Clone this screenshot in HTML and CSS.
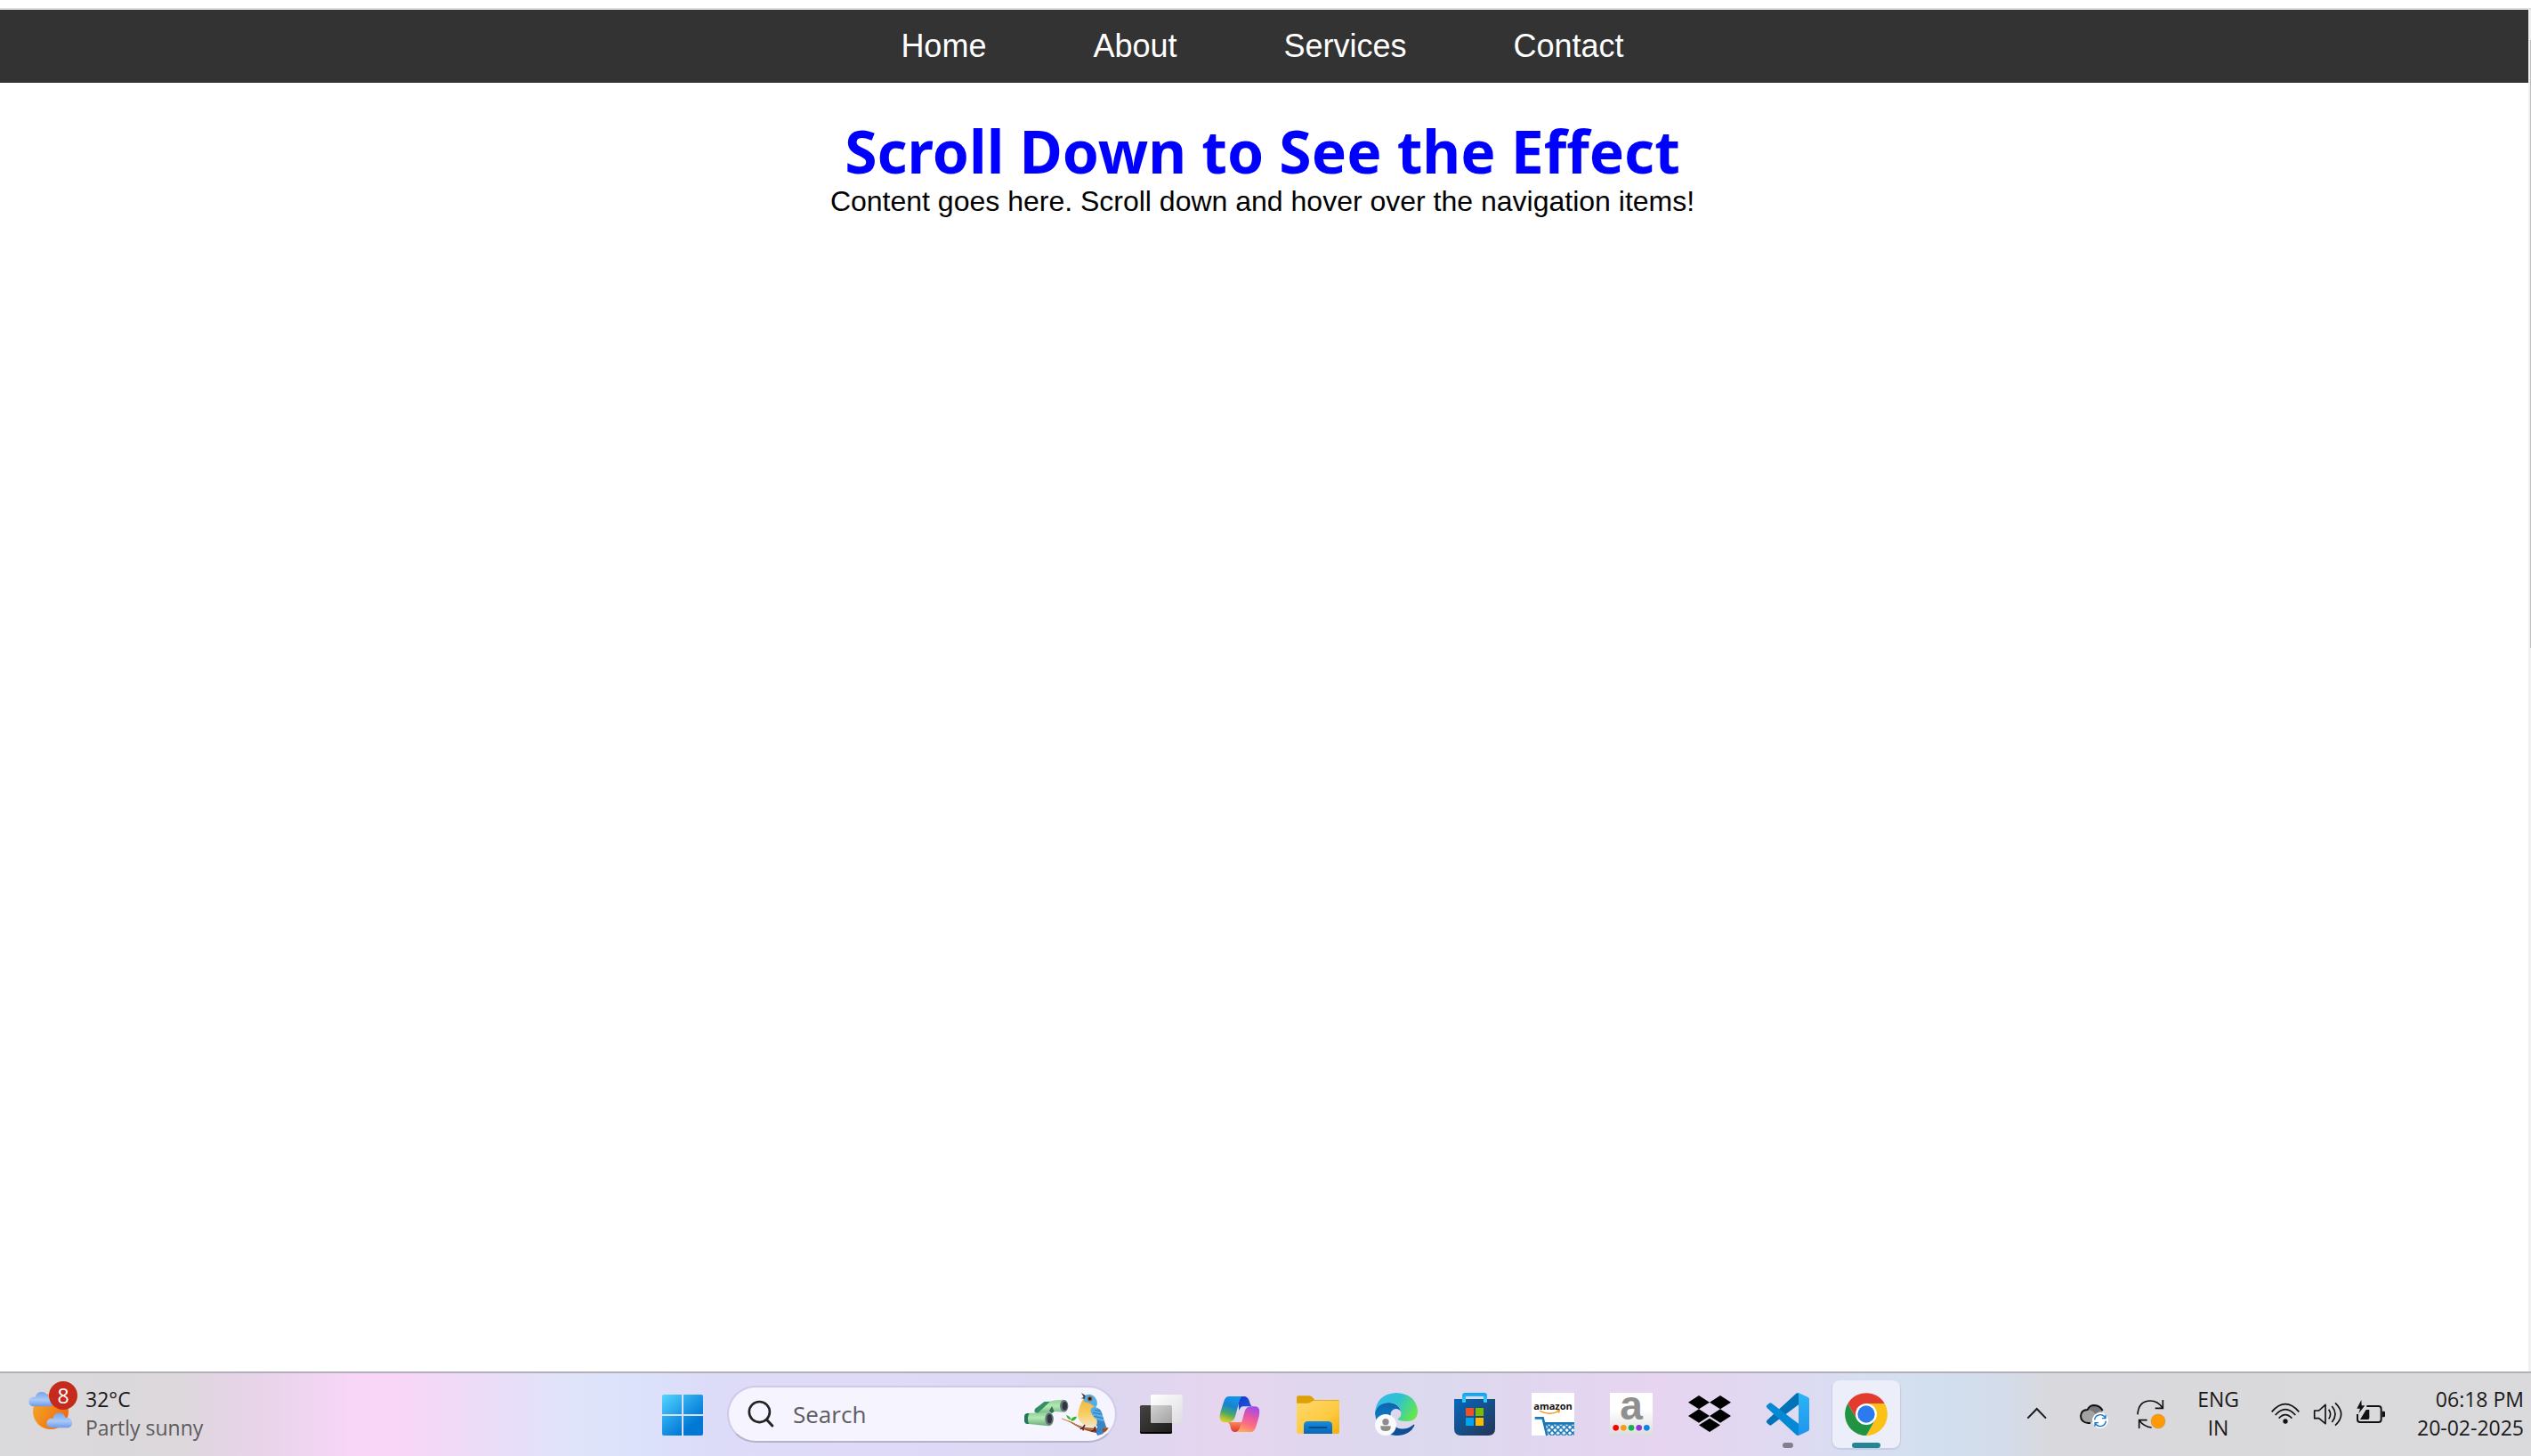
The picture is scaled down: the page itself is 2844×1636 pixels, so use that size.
FILE: index.html
```html
<!DOCTYPE html>
<html lang="en">
<head>
<meta charset="utf-8">
<title>Scroll Effect</title>
<link rel="stylesheet" href="styles.css">
</head>
<body>
<div class="window-edge"></div>
<div class="viewport">
  <div class="page">
    <nav class="navbar">
      <ul class="nav-list">
        <li><a href="#home">Home</a></li>
        <li><a href="#about">About</a></li>
        <li><a href="#services">Services</a></li>
        <li><a href="#contact">Contact</a></li>
      </ul>
    </nav>
    <main class="content">
      <h1>Scroll Down to See the Effect</h1>
      <p>Content goes here. Scroll down and hover over the navigation items!</p>
    </main>
  </div>
  <div class="scrollbar"><div class="thumb"></div></div>
</div>

<footer class="taskbar">
  <button class="weather" type="button">
    <span class="weather-icon">
      <svg width="56" height="76" viewBox="96 66 168 228" aria-hidden="true">
        <defs>
          <linearGradient id="sun" x1="0" y1="0" x2="1" y2="0.6"><stop offset="0" stop-color="#f3b02a"/><stop offset="1" stop-color="#f26a0f"/></linearGradient>
          <linearGradient id="cloud" x1="0" y1="0" x2="0" y2="1"><stop offset="0" stop-color="#78a3ea"/><stop offset=".55" stop-color="#a9caf8"/><stop offset="1" stop-color="#7099e6"/></linearGradient>
        </defs>
        <circle cx="171" cy="171" r="60" fill="url(#sun)"/>
        <path d="M113 154a15 15 0 0 1 0-32h6a22 22 0 0 1 43 0c14 0 22 6 22 16s-7 16-16 16z" fill="url(#cloud)"/>
        <path d="M173 226a14 14 0 0 1 1-32h5a21 21 0 0 1 41-3c14-1 23 7 23 18s-8 17-17 17z" fill="url(#cloud)"/>
      </svg>
      <span class="badge">8</span>
    </span>
    <span class="two-lines"><span>32°C</span><span class="muted">Partly sunny</span></span>
  </button>

  <div class="apps">
    <button class="app" type="button" aria-label="Start">
      <svg viewBox="1029 105 144 144">
        <defs><linearGradient id="win" gradientUnits="userSpaceOnUse" x1="1032" y1="111" x2="1150" y2="249"><stop offset="0" stop-color="#52d6ff"/><stop offset=".5" stop-color="#1c98e6"/><stop offset=".8" stop-color="#0078d4"/></linearGradient></defs>
        <path fill="url(#win)" d="M1038 111h60v66h-66v-60q0-6 6-6zM1104 111h60q6 0 6 6v60h-66zM1032 183h66v66h-60q-6 0-6-6zM1104 183h66v60q0 6-6 6h-60z"/>
      </svg>
    </button>

    <label class="search">
      <svg class="glass" viewBox="120 130 90 94" aria-hidden="true"><circle cx="160" cy="171" r="35" fill="none" stroke="#222" stroke-width="8"/><path d="M184 197l20 21" stroke="#222" stroke-width="9" stroke-linecap="round"/></svg>
      <input type="text" placeholder="Search" aria-label="Search">
      <svg class="bird" viewBox="1050 102 288 150" aria-hidden="true">
        <defs>
          <linearGradient id="tube" x1="0" y1="0" x2="0" y2="1"><stop offset="0" stop-color="#8ccf95"/><stop offset=".4" stop-color="#b4e8b2"/><stop offset="1" stop-color="#68a977"/></linearGradient>
          <linearGradient id="belly" x1="0" y1="0" x2="0" y2="1"><stop offset="0" stop-color="#eeb537"/><stop offset=".55" stop-color="#f8cd62"/><stop offset="1" stop-color="#f3e6c6"/></linearGradient>
        </defs>
        <path d="M1106 146l14-11 24-1-10 28-38 14-9-7q0-12 9-15z" fill="#338e66"/>
        <path d="M1100 172l40-38q6-4 44-6 17 3 17 22-2 18-14 20l-46-3-26 14z" fill="url(#tube)"/>
        <path d="M1136 167l10-17 8 18-8 6z" fill="#2e7352"/>
        <ellipse cx="1187" cy="149" rx="14" ry="20" fill="#67717b"/><ellipse cx="1189" cy="149" rx="8" ry="14" fill="#30343f"/>
        <rect x="1053" y="174" width="26" height="36" rx="11" fill="#23775a"/>
        <path d="M1070 173l68-2q14 5 14 22-2 23-17 24l-67-7q-7-20 2-37z" fill="url(#tube)"/>
        <ellipse cx="1137" cy="193" rx="14" ry="21" fill="#67717b"/><ellipse cx="1138" cy="193" rx="8" ry="15" fill="#30343f"/>
        <path d="M1166 189q38 9 66 24 30 16 105 9-8 20-31 20-50-7-91-33-18-12-49-20z" fill="#9a4d1d"/>
        <path d="M1180 192q36 12 62 28 30 12 72 10" fill="none" stroke="#d08545" stroke-width="3"/>
        <path d="M1194 180q14 4 16 15-11 1-16-15zM1210 196q4-12 20-11-5 16-20 14z" fill="#35b52c"/>
        <path d="M1285 154q28-2 32 30l13 39-14 2 3 18-19 6-7-12 7-17-25-26z" fill="#3a83c5"/>
        <path d="M1255 120q-19 29-22 62 8 36 48 39 25 0 14-36-16-22-4-48z" fill="url(#belly)"/>
        <path d="M1252 122q4-13 22-12 24 4 25 34l-8 14q-9-20-36-22z" fill="#55aee3"/>
        <path d="M1278 158q6-8 16-4 24 14 27 48-28-3-39-23-8-12-4-21z" fill="#55aee3"/>
        <path d="M1284 172l30 5M1288 184l31 7M1290 163l18 4" stroke="#2d73b7" stroke-width="3"/>
        <path d="M1245 105l14 9-2 11-13-1 9-5z" fill="#4a3c40"/>
        <circle cx="1274" cy="125" r="8" fill="#9a4c25"/><circle cx="1274" cy="125" r="4" fill="#111"/>
        <path d="M1257 213l-7 12-9 1M1292 219l-3 12-10 4M1250 222l2 10M1290 228l5 8" fill="none" stroke="#62242b" stroke-width="5"/>
      </svg>
    </label>

    <button class="app" type="button" aria-label="Task view">
      <svg viewBox="63 105 144 144">
        <defs><linearGradient id="tvd" x1="0" y1="0" x2="1" y2="1"><stop offset="0" stop-color="#464442"/><stop offset="1" stop-color="#1d1d1c"/></linearGradient><linearGradient id="tvl" x1="0" y1="0" x2="1" y2="1"><stop offset="0" stop-color="#fff"/><stop offset="1" stop-color="#dedcdf"/></linearGradient><linearGradient id="tvo" x1="0" y1="0" x2="1" y2="1"><stop offset="0" stop-color="#d2d2d2"/><stop offset="1" stop-color="#a2a2a2"/></linearGradient></defs>
        <rect x="63" y="149" width="108" height="94" rx="5"/>
        <rect x="63" y="147" width="108" height="90" rx="5" fill="url(#tvd)"/>
        <rect x="99" y="111" width="107" height="96" rx="5" fill="url(#tvl)"/>
        <path d="M99 147h67q5 0 5 5v55h-67q-5 0-5-5z" fill="url(#tvo)"/>
      </svg>
    </button>
    <button class="app" type="button" aria-label="Copilot">
      <svg viewBox="327 105 144 144">
        <defs>
          <linearGradient id="cp1" x1="0.3" y1="0" x2="0" y2="1"><stop offset="0" stop-color="#1591e8"/><stop offset=".3" stop-color="#1784cf"/><stop offset=".6" stop-color="#4ba866"/><stop offset=".85" stop-color="#c5c72b"/><stop offset="1" stop-color="#f2cf12"/></linearGradient>
          <linearGradient id="cp2" x1="0.6" y1="0" x2="0.3" y2="1"><stop offset="0" stop-color="#a34de8"/><stop offset=".4" stop-color="#e858a0"/><stop offset=".7" stop-color="#fb7181"/><stop offset="1" stop-color="#ffac55"/></linearGradient>
          <linearGradient id="cp3" x1="0" y1="0" x2="1" y2="1"><stop offset="0" stop-color="#1737c8"/><stop offset="1" stop-color="#2060dd"/></linearGradient>
          <linearGradient id="cp4" x1="0" y1="0" x2="0" y2="1"><stop offset="0" stop-color="#fb8755"/><stop offset="1" stop-color="#d83a35"/></linearGradient>
        </defs>
        <path d="M392 117h21q14 0 19 17 3 17 13 17h-34q-10 0-14 14z" fill="url(#cp3)"/>
        <path d="M408 204l-9 22q-4 11-16 11-12 0-15-16-3-17-12-17z" fill="url(#cp4)"/>
        <path d="M361 117h50q-8 0-12 13l-15 54q-5 20-22 20h-13q-24 0-14-37l9-28q6-22 17-22z" fill="url(#cp1)"/>
        <path d="M438 237h-50q8 0 12-13l15-54q5-19 22-19h13q22 0 13 37l-8 27q-6 22-18 22z" fill="url(#cp2)"/>
      </svg>
    </button>
    <button class="app" type="button" aria-label="File Explorer">
      <svg viewBox="591 105 144 144">
        <defs><linearGradient id="fo" x1="0" y1="0" x2="1" y2="1"><stop offset="0" stop-color="#ffd86c"/><stop offset=".6" stop-color="#fdca41"/><stop offset="1" stop-color="#f4af08"/></linearGradient><linearGradient id="fob" x1="0" y1="0" x2="0" y2="1"><stop offset="0" stop-color="#158bdd"/><stop offset="1" stop-color="#0867b5"/></linearGradient></defs>
        <path d="M597 115h36q7 0 12 6l7 8h78q5 0 5 5v20H591v-33q0-6 6-6z" fill="#dda006"/>
        <path d="M591 140h36q8 0 14-5 5-4 11-4h78q5 0 5 5v101q0 6-6 6H597q-6 0-6-6z" fill="url(#fo)"/>
        <path d="M615 243v-28q0-14 14-14h68q14 0 14 14v28z" fill="url(#fob)"/><path d="M634 222h57" stroke="#064b8c" stroke-width="6" stroke-linecap="round"/>
      </svg>
    </button>
    <button class="app" type="button" aria-label="Microsoft Edge">
      <svg viewBox="855 105 144 144">
        <defs><linearGradient id="ed1" x1="0" y1="0.2" x2="1" y2="0.6"><stop offset="0" stop-color="#35b8f1"/><stop offset=".5" stop-color="#2dc3cf"/><stop offset="1" stop-color="#66e64e"/></linearGradient><linearGradient id="ed2" x1="0" y1="0" x2="0" y2="1"><stop offset="0" stop-color="#0d65ad"/><stop offset="1" stop-color="#128ddd"/></linearGradient></defs>
        <path d="M855 174q4-34 45-36 38 1 43 33-4-12-18-12-18 2-19 25 0 31 28 42 30 8 53-14-13 36-60 37-63-2-72-75z" fill="url(#ed2)"/>
        <path d="M908 174q-8 38 25 50 26 9 52-12 4-1 3 4-15 32-61 33-32-4-36-32-1-24 17-43z" fill="#104f96"/>
        <path d="M855 176q3-66 71-71 66 3 73 60 0 36-36 36-32 0-31-9 12-5 11-20-4-33-40-34-42 2-48 38z" fill="url(#ed1)"/>
        <circle cx="891" cy="213" r="36" fill="#fafafa"/><circle cx="891" cy="203" r="11" fill="#8d8d8d"/><path d="M874 217h34v4q0 13-17 13t-17-13z" fill="#8d8d8d"/>
      </svg>
    </button>
    <button class="app" type="button" aria-label="Microsoft Store">
      <svg viewBox="99 105 144 144">
        <defs><linearGradient id="st" x1="0" y1="0" x2="1" y2="1"><stop offset="0" stop-color="#0669bc"/><stop offset="1" stop-color="#263455"/></linearGradient><linearGradient id="hd" x1="0" y1="0" x2="0" y2="1"><stop offset="0" stop-color="#0ea0f0"/><stop offset="1" stop-color="#3ad5fa"/></linearGradient></defs>
        <path d="M102 126h138v100q0 23-23 23h-92q-23 0-23-23z" fill="url(#st)"/>
        <path d="M129 137v-22q0-10 10-10h64q10 0 10 10v22h-12v-20h-60v20z" fill="url(#hd)"/>
        <path d="M141 156h27v27h-27z" fill="#f25022"/><path d="M174 156h27v27h-27z" fill="#7fba00"/><path d="M141 189h27v27h-27z" fill="#00a4ef"/><path d="M174 189h27v27h-27z" fill="#ffb900"/>
      </svg>
    </button>
    <button class="app" type="button" aria-label="Amazon">
      <svg viewBox="363 105 144 144">
        <defs><pattern id="mesh" width="20" height="20" patternUnits="userSpaceOnUse" x="412" y="211"><path d="M0 0l20 20M20 0L0 20" stroke="#1b78b8" stroke-width="5"/></pattern></defs>
        <path d="M363 105h144v144H363z" fill="#fff"/>
        <text x="435" y="161" text-anchor="middle" class="amazon-word">amazon</text>
        <path d="M391 166q32 17 64 1M448 163l9 0-2 10" fill="none" stroke="#f7981d" stroke-width="4"/>
        <path d="M408 208h99v41h-86z" fill="url(#mesh)"/>
        <path d="M374 190h27l14 59M404 208h103" fill="none" stroke="#1b78b8" stroke-width="8"/>
      </svg>
    </button>
    <button class="app" type="button" aria-label="Amazon Assistant">
      <svg viewBox="627 105 144 144">
        <defs><linearGradient id="aa" x1="0" y1="0" x2="0" y2="1"><stop offset=".4" stop-color="#fff"/><stop offset="1" stop-color="#dcdcdc"/></linearGradient></defs>
        <path d="M627 105h144v144H627z" fill="url(#aa)"/>
        <text x="699" y="196" text-anchor="middle" class="a-word">a</text>
        <circle cx="647" cy="223" r="10" fill="#f00"/><circle cx="673" cy="223" r="10" fill="#f79a17"/><circle cx="699" cy="223" r="10" fill="#1cab59"/><circle cx="725" cy="223" r="10" fill="#9035d8"/><circle cx="751" cy="223" r="10" fill="#0a84e4"/>
      </svg>
    </button>
    <button class="app" type="button" aria-label="Dropbox">
      <svg viewBox="51 105 144 144"><path d="M87 114l36 23-36 23-36-23zM159 114l36 23-36 23-36-23zM87 160l36 23-36 23-36-23zM159 160l36 23-36 23-36-23zM123 191l36 23-36 23-36-23z"/></svg>
    </button>
    <button class="app running" type="button" aria-label="Visual Studio Code">
      <svg viewBox="315 105 144 144">
        <defs><linearGradient id="vs" x1="0" y1="0" x2="0" y2="1"><stop offset="0" stop-color="#2cb4f6"/><stop offset="1" stop-color="#2094ee"/></linearGradient></defs>
        <path d="M423 105v40l-91 68q-4 3-8 0l-8-7q-3-4 0-8l99-91q4-3 8-2z" fill="#0072b5"/>
        <path d="M423 249v-40l-91-69q-4-3-8 0l-8 7q-3 4 0 8l99 92q4 3 8 2z" fill="#0489d4"/>
        <path d="M423 105l32 15q4 2 4 7v100q0 5-4 7l-32 15q-3 0-5-1 5-1 5-6V112q0-5-5-6 2-1 5-1z" fill="url(#vs)"/>
      </svg>
    </button>
    <button class="app active" type="button" aria-label="Google Chrome">
      <svg viewBox="579 105 144 144">
        <path d="M651 177L651 141H713A72 72 0 0 1 651 249L682 195z" fill="#fbc116"/>
        <path d="M651 177L682 195 651 249A72 72 0 0 1 589 141L620 195z" fill="#229342"/>
        <path d="M589 141L620 195 640 160 651 141H713A72 72 0 0 0 589 141z" fill="#e33b2e"/>
        <circle cx="651" cy="177" r="36" fill="#fff"/><circle cx="651" cy="177" r="29" fill="#2c7bee"/>
      </svg>
    </button>
  </div>

  <div class="tray">
    <div class="tray-icons wide">
      <svg viewBox="276 129 96 96"><path d="M292 191l31-32 31 32" fill="none" stroke="#1a1a1a" stroke-width="6"/></svg>
      <svg viewBox="468 129 96 96">
        <path d="M498 206q-26 2-27-23 2-22 23-21 6-15 23-15 19 1 28 18l-10 35z" fill="#a2a2a2"/>
        <path d="M494 162q6-15 23-15 19 1 28 18-16 0-22 14-12-16-29-17z" fill="#777"/>
        <path d="M504 207h-8q-24-2-25-24 2-21 23-21 6-15 23-15 19 1 28 18" fill="none" stroke="#111" stroke-width="6"/>
        <circle cx="537" cy="198" r="27" fill="#fff"/>
        <path d="M518 196a19 19 0 0 1 35-8M556 200a19 19 0 0 1-35 9M555 179v12h-12M519 218v-12h12" fill="none" stroke="#1a73c4" stroke-width="4"/>
      </svg>
      <svg viewBox="660 129 96 96">
        <path d="M663 178q3-46 43-46 25 0 41 24M748 129v28h-26M710 222q-24-2-42-24M668 225v-28h27" fill="none" stroke="#111" stroke-width="5"/>
        <circle cx="732" cy="201" r="24" fill="#ff9a05" stroke="#a87939" stroke-width="1"/>
      </svg>
    </div>
    <button class="two-lines language" type="button"><span>ENG</span><span>IN</span></button>
    <div class="tray-icons">
      <svg viewBox="156 129 96 96"><path d="M158 169q46-52 92 0M170 180q34-38 68 0M182 191q22-24 44 0" fill="none" stroke="#111" stroke-width="5"/><circle cx="204" cy="201" r="8" fill="#111"/></svg>
      <svg viewBox="300 129 96 96"><path d="M302 165h15l22-20v64l-22-18h-15zM350 161q12 16 0 32M361 150q22 27 0 54M372 139q40 38 0 76" fill="none" stroke="#111" stroke-width="5" stroke-linejoin="round"/></svg>
      <svg viewBox="444 129 96 96"><path d="M478 150h40q9 0 9 9v36q0 9-9 9h-62q-9 0-9-9v-18" fill="none" stroke="#111" stroke-width="6"/><path d="M530 167h6q4 0 4 4v12q0 4-4 4h-6zM460 129l-15 29h11l-5 17 21-27h-11zM456 195l20-33h11v28q0 5-5 5z" fill="#111"/></svg>
    </div>
    <button class="two-lines clock" type="button"><span>06:18 PM</span><span>20-02-2025</span></button>
  </div>
</footer>
</body>
</html>
```
FILE: styles.css
```css
* {
  box-sizing: border-box;
  margin: 0;
  padding: 0;
}

body {
  display: flex;
  flex-direction: column;
  min-height: 100vh;
  background: #fff;
  color: #000;
  font-family: Arial, "Liberation Sans", sans-serif;
}

button {
  border: 0;
  background: none;
  color: inherit;
  font: inherit;
}

svg {
  display: block;
  flex: none;
  overflow: visible;
}

.window-edge {
  height: 11px;
  border-bottom: 2px solid #dfe3e3;
}

.viewport {
  display: flex;
  flex: 1;
}

.page {
  flex: 1;
}

.navbar {
  padding: 20px 4px 20px 0;
  background: #333;
}

.nav-list {
  display: flex;
  justify-content: center;
  gap: 120px;
  list-style: none;
}

.nav-list a {
  display: block;
  color: #fff;
  font-size: 36px;
  line-height: 42px;
  text-decoration: none;
}

.content {
  padding: 38px 4px 40px 0;
  text-align: center;
}

.content h1 {
  color: #00f;
  font-family: "Lucida Sans", "Noto Sans", sans-serif;
  font-size: 66px;
  font-weight: 700;
  line-height: 76px;
}

.content p {
  font-size: 32px;
  line-height: 38px;
}

.scrollbar {
  width: 3px;
  padding: 34px 0 0 2px;
  background: #f0f0f0;
}

.thumb {
  height: 683px;
  background: #bdbdbd;
}

.taskbar {
  display: grid;
  grid-template-columns: 1fr auto 1fr;
  align-items: center;
  height: 95px;
  padding: 0 8px 2px 28px;
  border-top: 2px solid #b1afb7;
  background: linear-gradient(90deg,
    #dad9db 0%, #dcd8db 7%, #e5d4e5 9%, #ead4ec 11%, #f8d6f8 14%, #f9d5f7 15.5%,
    #f0daf8 18%, #e7dff9 20.5%, #dfe4fa 22.5%, #dce2fb 25%, #dddcf8 28%,
    #dfdaf8 35%, #dcd7f0 43%, #e6d5ef 48.5%, #dfd7ed 52%, #dcd9ee 57%,
    #e2d6f0 61.5%, #e6d4f0 65.5%, #e3d7f0 68%, #dedaf2 71%, #d7dff2 73.5%,
    #d2dfee 76.5%, #d3dceb 79%, #d9d9dd 81%, #dad9db 100%);
  color: #1a1a1a;
  font-family: "Segoe UI", "Open Sans", sans-serif;
  font-size: 23px;
}

.weather {
  display: flex;
  align-items: center;
  justify-self: start;
  gap: 8px;
  padding-left: 4px;
  text-align: left;
}

.weather-icon {
  position: relative;
}

.badge {
  position: absolute;
  top: 1px;
  right: 1px;
  width: 32px;
  height: 32px;
  border-radius: 50%;
  background: #c42b1c;
  color: #fff;
  font-size: 23px;
  line-height: 32px;
  text-align: center;
}

.two-lines {
  display: flex;
  flex-direction: column;
  padding-bottom: 2px;
  line-height: 32px;
  white-space: nowrap;
}

.muted {
  color: #5c5b5e;
}

.apps {
  display: flex;
  align-items: center;
  gap: 12px;
}

.app {
  position: relative;
  display: grid;
  place-items: center;
  width: 76px;
  height: 76px;
  border-radius: 8px;
}

.app svg {
  width: 48px;
  height: 48px;
}

.active {
  background: #eceef9;
  box-shadow: 0 1px 1px 1px #c9cbe0;
}

.running::after,
.active::after {
  content: "";
  position: absolute;
  bottom: 0;
  left: 50%;
  width: 12px;
  height: 6px;
  border-radius: 3px;
  background: #837d8c;
  transform: translateX(-50%);
}

.active::after {
  width: 32px;
  background: #248594;
}

.search {
  display: flex;
  align-items: center;
  width: 438px;
  height: 64px;
  padding: 0 7px 0 21px;
  border: 2px solid #d0c9e8;
  border-bottom-color: #b7b1cc;
  border-radius: 32px;
  background: #f6f4fe;
}

.glass {
  width: 30px;
  height: 31px;
}

.bird {
  width: 96px;
  height: 50px;
}

.search input {
  flex: 1;
  min-width: 0;
  padding-left: 21px;
  border: 0;
  background: none;
  color: inherit;
  font: inherit;
  font-size: 26px;
}

.search input::placeholder {
  color: #5d5c61;
}

.amazon-word {
  fill: #111;
  font-family: "Open Sans", sans-serif;
  font-size: 33px;
  font-weight: 700;
}

.a-word {
  fill: #8f8f8f;
  font-family: Arial, "Liberation Sans", sans-serif;
  font-size: 138px;
  font-weight: 700;
}

.tray {
  display: flex;
  align-items: center;
  justify-self: end;
  gap: 36px;
}

.tray-icons {
  display: flex;
  gap: 16px;
}

.tray-icons.wide {
  gap: 32px;
}

.tray-icons svg {
  width: 32px;
  height: 32px;
}

.language {
  text-align: center;
}

.clock {
  text-align: right;
}
```
